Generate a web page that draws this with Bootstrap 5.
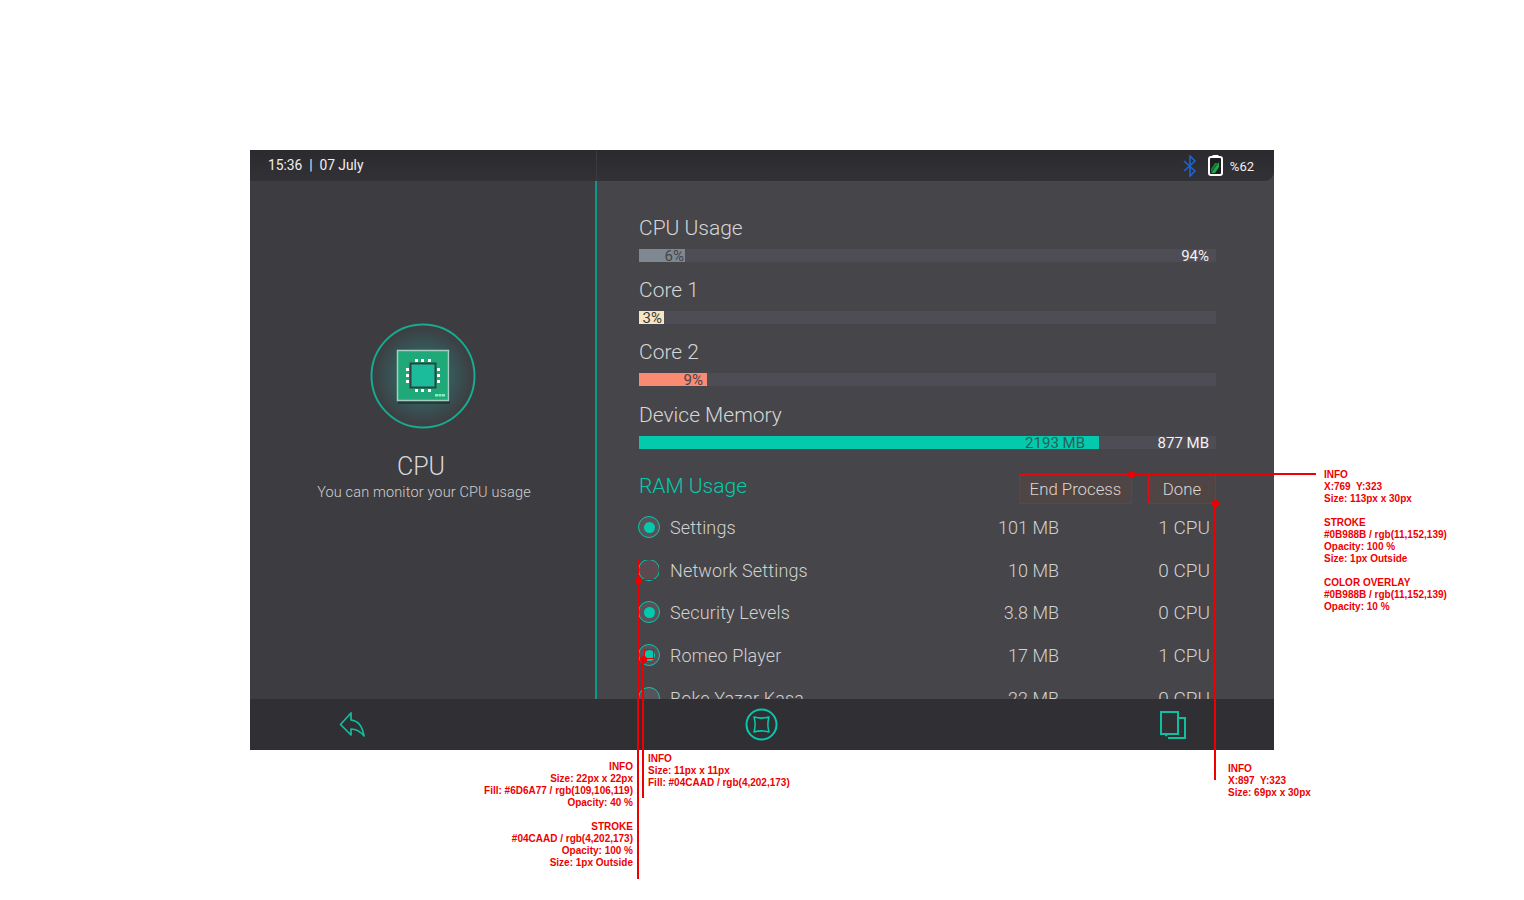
<!DOCTYPE html>
<html lang="en">
<head>
    <meta charset="UTF-8">
    <title>CPU Monitor</title>
    <link href="https://cdn.jsdelivr.net/npm/bootstrap@5.3.0/dist/css/bootstrap.min.css" rel="stylesheet">
    <style>
        html, body { height: 100%; margin: 0; background: #fff; overflow: hidden; }
        body { font-family: Roboto, "Liberation Sans", sans-serif; font-weight: 300; position: relative; }

        /* tablet screen */
        .screen { position: absolute; left: 250px; top: 150px; width: 1024px; height: 600px; background: #464549; }
        .status-bar { height: 31px; background: linear-gradient(#2b2a2f, #323136); border-bottom-right-radius: 9px; color: #f0f0f0; }
        .status-left { width: 347px; padding-left: 18px; font-size: 13.8px; font-weight: 400; border-right: 1px solid #3a3a3f; line-height: 31px; }
        .status-right { padding-right: 20px; gap: 11px; }
        .batt-text { font-size: 13px; font-weight: 400; margin-left: -4px; margin-top: 3px; }

        .middle { height: 518px; overflow: hidden; }
        .side-panel { width: 347px; background: #3d3c40; border-right: 2px solid #0b988b; color: #d8d8d8; padding-top: 142px; }
        .side-title { font-size: 25px; line-height: 30px; margin-top: 23px; margin-right: 3px; }
        .side-sub { font-size: 14.5px; line-height: 20px; margin-top: 1px; padding-left: 3px; letter-spacing: .15px; color: #d0d0d0; }

        .main-panel { padding: 34px 58px 0 42px; color: #d6d6d6; }
        .bar-title { font-size: 21px; line-height: 26px; margin-bottom: 8px; }
        .bar-block { height: 62px; }
        .bar-last { margin-top: 1px; }
        .track { height: 13px; background: #4e4d55; font-size: 15px; line-height: 15px; font-weight: 400; }
        .fill { height: 13px; text-align: right; padding-right: 2px; color: #45454a; flex: none; }
        .fill-grey { background: #7f8890; padding-right: 1px; }
        .fill-cream { background: #f8e6c2; color: #3a3a3d; }
        .fill-salmon { background: #fb8a72; padding-right: 4px; }
        .fill-teal { background: #04caad; padding-right: 14px; color: #2a5f58; }
        .track-end { margin-left: auto; padding-right: 7px; color: #f2f2f2; }

        .ram-head { margin-top: 8px; height: 43px; }
        .ram-title { font-size: 21px; color: #04caad; line-height: 26px; margin-top: 1px; }
        .spec-btn { height: 30px; font-size: 16.8px; line-height: 28px; background: #4f4545; border: 1px solid #e40c14; color: #dcd6d2; text-align: center; font-weight: 300; padding: 0; border-radius: 0; margin-top: 2px; }
        .spec-btn:hover { background: #4f4545; color: #dcd6d2; border-color: #e40c14; }
        .btn-end { width: 113px; margin-right: 16px; }
        .btn-done { width: 68px; }

        .proc-row { height: 42.7px; font-size: 18px; line-height: 26px; color: #d2d2d2; }
        .radio-dot { width: 22px; height: 22px; border-radius: 50%; border: 1px solid #04caad; background: rgba(109, 106, 119, .4); margin-left: -1px; margin-right: 10px; margin-top: 1px; flex: none; }
        .radio-dot.on::after { content: ""; display: block; width: 11px; height: 11px; border-radius: 50%; background: #04caad; margin: 4.5px; }
        .radio-dot.red { background: #5a4a50; }
        .proc-name { width: 270px; letter-spacing: .15px; }
        .proc-mem { width: 119px; text-align: right; }
        .proc-cpu { width: 151px; text-align: right; font-size: 19px; }

        .foot-bar { height: 51px; background: #302f34; position: relative; }
        .foot-icon { position: absolute; top: 0; }
        .ic-back { left: 88px; }
        .ic-stop { left: 494px; }
        .ic-copy { left: 908px; }

        /* red spec overlay */
        .spec-note { position: absolute; color: #ef0000; font: bold 10px/12px "Liberation Sans", sans-serif; white-space: nowrap; }
        .spec-note p { margin: 0 0 12px; }
        .note-a { left: 1324px; top: 469px; }
        .note-b { right: 891px; top: 761px; text-align: right; }
        .note-c { left: 648px; top: 753px; }
        .note-d { left: 1228px; top: 763px; }
        .red-line { position: absolute; background: #ef0000; }
        .line-h { left: 1131px; top: 473px; width: 185px; height: 2px; }
        .line-v1 { left: 637px; top: 580px; width: 2px; height: 299px; }
        .line-v2 { left: 642px; top: 659px; width: 2px; height: 139px; }
        .line-v3 { left: 1214px; top: 503px; width: 2px; height: 277px; }
        .red-dot { position: absolute; width: 7px; height: 7px; border-radius: 50%; background: #ef0000; }
        .dot-1 { left: 1128px; top: 471px; }
        .dot-2 { left: 635px; top: 577px; }
        .dot-3 { left: 640px; top: 656px; }
        .dot-4 { left: 1212px; top: 500px; }
        .red-box { position: absolute; border: 1px solid #ef0000; }
        .box-1 { left: 638px; top: 559px; width: 22px; height: 21px; }
        .box-2 { left: 644px; top: 649px; width: 10px; height: 10px; }
    </style>
</head>
<body>
    <div class="screen d-flex flex-column">
        <div class="status-bar d-flex">
            <div class="status-left">15:36&nbsp; |&nbsp; 07 July</div>
            <div class="status-right d-flex flex-grow-1 justify-content-end align-items-center">
                <svg width="14" height="22" viewBox="0 0 14 22" fill="none" stroke="#1c64d2" stroke-width="1.6"><path d="M1 6l11 10-5 5V1l5 5L1 16"/></svg>
                <svg width="15" height="21" viewBox="0 0 15 21"><rect x="4.5" y="0" width="6" height="3" fill="#fff"/><rect x="1" y="2" width="13" height="18" rx="2" fill="#1d1d20" stroke="#fff" stroke-width="2"/><path d="M3 18l8-11v5l-4 6z" fill="#1da84c"/><path d="M3 14l4-6h3l-7 9z" fill="#167f3a"/></svg>
                <span class="batt-text">%62</span>
            </div>
        </div>

        <div class="middle d-flex">
            <div class="side-panel text-center">
                <svg class="d-block" width="345" height="106" viewBox="0 0 345 106">
                    <defs>
                        <radialGradient id="glow"><stop offset="0" stop-color="#2f7a78"/><stop offset="1" stop-color="#3d3c40"/></radialGradient>
                    </defs>
                    <circle cx="173" cy="53" r="51.5" fill="url(#glow)" stroke="#17ab93" stroke-width="2"/>
                    <rect x="148" y="29" width="52" height="52" fill="#1d2a2a" opacity=".6"/>
                    <rect x="147.5" y="27.5" width="51" height="50" fill="#1fa878" stroke="#a5cfc0" stroke-width="1.5"/>
                    <rect x="160.5" y="40.5" width="25" height="24" fill="#1abc9c" stroke="#33413f" stroke-width="2"/>
                    <g fill="#fff">
                        <rect x="165" y="36" width="3" height="3"/><rect x="171" y="36" width="3" height="3"/><rect x="178" y="36" width="3" height="3"/>
                        <rect x="165" y="66" width="3" height="3"/><rect x="171" y="66" width="3" height="3"/><rect x="178" y="66" width="3" height="3"/>
                        <rect x="156" y="45" width="3" height="3"/><rect x="156" y="51" width="3" height="3"/><rect x="156" y="57" width="3" height="3"/>
                        <rect x="187" y="45" width="3" height="3"/><rect x="187" y="51" width="3" height="3"/><rect x="187" y="57" width="3" height="3"/>
                    </g>
                    <g fill="#7ff0c0"><rect x="185" y="71" width="3" height="2.5"/><rect x="188.500" y="71" width="3" height="2.5"/><rect x="192" y="71" width="3" height="2.5"/></g>
                </svg>
                <div class="side-title">CPU</div>
                <div class="side-sub">You can monitor your CPU usage</div>
            </div>

            <div class="main-panel flex-grow-1">
                <div class="bar-block">
                    <div class="bar-title">CPU Usage</div>
                    <div class="track d-flex"><div class="fill fill-grey" style="width: 46px">6%</div><div class="track-end">94%</div></div>
                </div>
                <div class="bar-block">
                    <div class="bar-title">Core 1</div>
                    <div class="track d-flex"><div class="fill fill-cream" style="width: 25px">3%</div></div>
                </div>
                <div class="bar-block">
                    <div class="bar-title">Core 2</div>
                    <div class="track d-flex"><div class="fill fill-salmon" style="width: 68px">9%</div></div>
                </div>
                <div class="bar-block bar-last">
                    <div class="bar-title">Device Memory</div>
                    <div class="track d-flex"><div class="fill fill-teal" style="width: 460px">2193 MB</div><div class="track-end">877 MB</div></div>
                </div>

                <div class="ram-head d-flex align-items-start">
                    <div class="ram-title flex-grow-1">RAM Usage</div>
                    <button class="btn spec-btn btn-end">End Process</button>
                    <button class="btn spec-btn btn-done">Done</button>
                </div>

                <div class="proc-row d-flex">
                    <span class="radio-dot on"></span><span class="proc-name">Settings</span><span class="proc-mem">101 MB</span><span class="proc-cpu">1 CPU</span>
                </div>
                <div class="proc-row d-flex">
                    <span class="radio-dot red"></span><span class="proc-name">Network Settings</span><span class="proc-mem">10 MB</span><span class="proc-cpu">0 CPU</span>
                </div>
                <div class="proc-row d-flex">
                    <span class="radio-dot on"></span><span class="proc-name">Security Levels</span><span class="proc-mem">3.8 MB</span><span class="proc-cpu">0 CPU</span>
                </div>
                <div class="proc-row d-flex">
                    <span class="radio-dot on"></span><span class="proc-name">Romeo Player</span><span class="proc-mem">17 MB</span><span class="proc-cpu">1 CPU</span>
                </div>
                <div class="proc-row d-flex">
                    <span class="radio-dot"></span><span class="proc-name">Boke Yazar Kasa</span><span class="proc-mem">22 MB</span><span class="proc-cpu">0 CPU</span>
                </div>
            </div>
        </div>

        <div class="foot-bar">
            <svg class="foot-icon ic-back" width="30" height="51" viewBox="0 0 30 51" fill="none" stroke="#0fbf9f" stroke-width="1.7" stroke-linejoin="round"><path d="M2.500 25.500L13 14v7c7 1 11 5 13 16-4-5-8-7-13-7v6z"/></svg>
            <svg class="foot-icon ic-stop" width="36" height="51" viewBox="0 0 36 51" fill="none" stroke="#04caad"><circle cx="17.500" cy="25.500" r="15" stroke-width="2"/><path d="M10 18c5 1.500 10 1.500 15 0-1.500 5-1.500 10 0 15-5-1.500-10-1.500-15 0 1.500-5 1.500-10 0-15z" stroke-width="1.500" stroke-linejoin="round"/></svg>
            <svg class="foot-icon ic-copy" width="32" height="51" viewBox="0 0 32 51" fill="none" stroke="#0fbf9f" stroke-width="2"><path d="M3 13h17v22H9l-1 2v-2H3z"/><path d="M20 19h7v20H10"/></svg>
        </div>
    </div>

    <div class="red-box box-1"></div>
    <div class="red-box box-2"></div>
    <div class="red-line line-h"></div>
    <div class="red-line line-v1"></div>
    <div class="red-line line-v2"></div>
    <div class="red-line line-v3"></div>
    <div class="red-dot dot-1"></div>
    <div class="red-dot dot-2"></div>
    <div class="red-dot dot-3"></div>
    <div class="red-dot dot-4"></div>

    <div class="spec-note note-a">
        <p>INFO<br>X:769&nbsp; Y:323<br>Size: 113px x 30px</p>
        <p>STROKE<br>#0B988B / rgb(11,152,139)<br>Opacity: 100 %<br>Size: 1px Outside</p>
        <p>COLOR OVERLAY<br>#0B988B / rgb(11,152,139)<br>Opacity: 10 %</p>
    </div>
    <div class="spec-note note-b">
        <p>INFO<br>Size: 22px x 22px<br>Fill: #6D6A77 / rgb(109,106,119)<br>Opacity: 40 %</p>
        <p>STROKE<br>#04CAAD / rgb(4,202,173)<br>Opacity: 100 %<br>Size: 1px Outside</p>
    </div>
    <div class="spec-note note-c">
        <p>INFO<br>Size: 11px x 11px<br>Fill: #04CAAD / rgb(4,202,173)</p>
    </div>
    <div class="spec-note note-d">
        <p>INFO<br>X:897&nbsp; Y:323<br>Size: 69px x 30px</p>
    </div>

    <script src="https://cdn.jsdelivr.net/npm/bootstrap@5.3.0/dist/js/bootstrap.bundle.min.js"></script>
</body>
</html>
